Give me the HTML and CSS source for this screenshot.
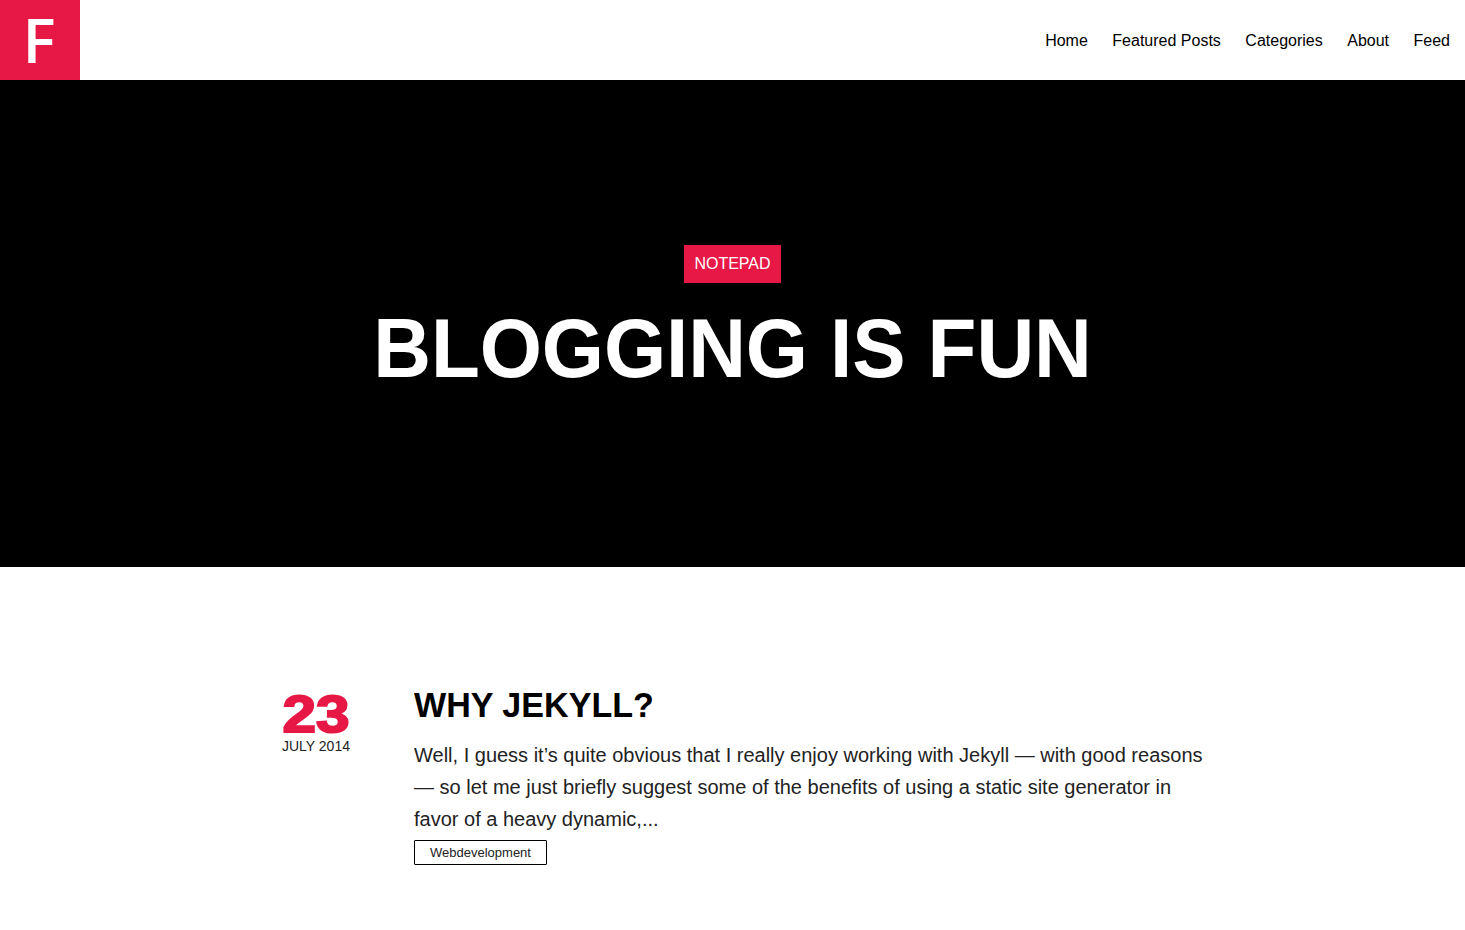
FILE: index.html
```html
<!DOCTYPE html>
<html lang="en">
<head>
<meta charset="utf-8">
<title>Blogging is fun</title>
<link rel="stylesheet" href="styles.css">
</head>
<body>
<header class="topbar">
  <a class="logo">F</a>
  <nav class="nav">
    <a>Home</a><a>Featured Posts</a><a>Categories</a><a>About</a><a>Feed</a>
  </nav>
</header>
<section class="hero">
  <span class="label">NOTEPAD</span>
  <h1 class="hero-title">BLOGGING IS FUN</h1>
</section>
<main class="posts">
  <article class="post">
    <div class="date"><span class="day">23</span><span class="month">JULY 2014</span></div>
    <div class="body">
      <h2 class="title">WHY JEKYLL?</h2>
      <p class="excerpt">Well, I guess it’s quite obvious that I really enjoy working with Jekyll — with good reasons — so let me just briefly suggest some of the benefits of using a static site generator in favor of a heavy dynamic,...</p>
      <a class="tag">Webdevelopment</a>
    </div>
  </article>
</main>
</body>
</html>
```
FILE: styles.css
```css
* { box-sizing: border-box; }
body { margin: 0; background: #fff; color: #000; font-family: "Liberation Sans", Arial, sans-serif; }
h1, h2, p { margin: 0; }
.topbar { display: flex; justify-content: space-between; height: 80px; }
.logo { width: 80px; height: 80px; padding-right: 2px; background: #e71845; color: #fff; font: 600 62px/78px "Open Sans", sans-serif; text-align: center; }
.nav { display: flex; align-items: center; gap: 24.5px; padding: 2px 15px 0 0; font-size: 16px; }
.hero { display: flex; flex-direction: column; align-items: center; height: 487px; padding-top: 165px; background: #000; color: #fff; }
.label { height: 38px; padding: 0 10px; background: #e71845; font-size: 16px; line-height: 37px; }
.hero-title { margin-top: 19px; font-size: 80px; line-height: 94px; font-weight: 700; letter-spacing: -0.1px; transform: scaleY(1.05); }
.posts { padding: 114px 0 0 282px; }
.post { display: flex; }
.date { width: 132px; padding-top: 14px; display: flex; flex-direction: column; }
/* Widened, thickened numerals for the heavy date figure */
.day { width: 68px; height: 42px; text-align: center; color: #e71845; font-size: 52px; font-weight: 700; line-height: 39px; -webkit-text-stroke: 2px #e71845; transform: scaleX(1.16); }
.month { margin-top: 1px; font-size: 14px; line-height: 16px; color: #222; }
.body { width: 800px; }
.title { width: max-content; font-size: 34.1px; line-height: 46px; transform: scaleY(1.05); }
.excerpt { margin-top: 12px; font-size: 20px; line-height: 32px; color: #222; }
.tag { display: block; width: 133px; height: 25px; margin-top: 5px; border: 1px solid #000; border-radius: 1px; font-size: 13px; line-height: 23px; text-align: center; color: #222; }
```
